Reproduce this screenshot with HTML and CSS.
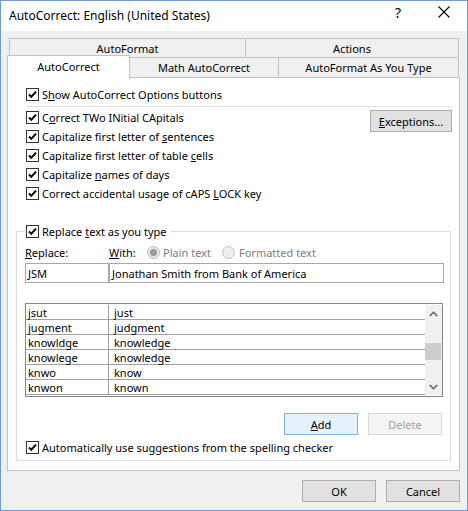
FILE: index.html
```html
<!DOCTYPE html>
<html>
<head>
<meta charset="utf-8">
<link rel="stylesheet" href="styles.css">
</head>
<body>
<div class="window">
  <div class="titlebar">
    <span class="title">AutoCorrect: English (United States)</span>
    <div class="caps">
      <span class="cap help">?</span>
      <span class="cap close"><svg width="12" height="12" viewBox="0 0 12 12"><path d="M0.5 0.5L11.5 11.5M11.5 0.5L0.5 11.5" stroke="#000" stroke-width="1.1" fill="none"/></svg></span>
    </div>
  </div>
  <div class="body">
    <div class="tabs">
      <div class="tabrow back">
        <div class="tab w-af">AutoFormat</div>
        <div class="tab w-act">Actions</div>
      </div>
      <div class="tabrow front">
        <div class="tab sel">AutoCorrect</div>
        <div class="tab w-math">Math AutoCorrect</div>
        <div class="tab w-afy">AutoFormat As You Type</div>
      </div>
    </div>
    <div class="panel">
      <div class="chk row-show"><span class="box"><svg width="11" height="11" viewBox="0 0 11 11"><path d="M2 5.5L4.3 7.8L9 2.6" stroke="#000" stroke-width="2" fill="none"/></svg></span><span>S<u>h</u>ow AutoCorrect Options buttons</span></div>
      <div class="sep"></div>
      <div class="opts">
        <div class="optlist">
          <div class="chk"><span class="box"><svg width="11" height="11" viewBox="0 0 11 11"><path d="M2 5.5L4.3 7.8L9 2.6" stroke="#000" stroke-width="2" fill="none"/></svg></span><span>C<u>o</u>rrect TWo INitial CApitals</span></div>
          <div class="chk"><span class="box"><svg width="11" height="11" viewBox="0 0 11 11"><path d="M2 5.5L4.3 7.8L9 2.6" stroke="#000" stroke-width="2" fill="none"/></svg></span><span>Capitalize first letter of <u>s</u>entences</span></div>
          <div class="chk"><span class="box"><svg width="11" height="11" viewBox="0 0 11 11"><path d="M2 5.5L4.3 7.8L9 2.6" stroke="#000" stroke-width="2" fill="none"/></svg></span><span>Capitalize first letter of table <u>c</u>ells</span></div>
          <div class="chk"><span class="box"><svg width="11" height="11" viewBox="0 0 11 11"><path d="M2 5.5L4.3 7.8L9 2.6" stroke="#000" stroke-width="2" fill="none"/></svg></span><span>Capitalize <u>n</u>ames of days</span></div>
          <div class="chk"><span class="box"><svg width="11" height="11" viewBox="0 0 11 11"><path d="M2 5.5L4.3 7.8L9 2.6" stroke="#000" stroke-width="2" fill="none"/></svg></span><span>Correct accidental usage of cAPS <u>L</u>OCK key</span></div>
        </div>
        <div class="btn exc"><u>E</u>xceptions...</div>
      </div>
      <div class="group">
        <div class="chk legend"><span class="box"><svg width="11" height="11" viewBox="0 0 11 11"><path d="M2 5.5L4.3 7.8L9 2.6" stroke="#000" stroke-width="2" fill="none"/></svg></span><span>Replace <u>t</u>ext as you type</span></div>
        <div class="labels">
          <span class="lbl-rep"><u>R</u>eplace:</span>
          <span class="lbl-with"><u>W</u>ith:</span>
          <span class="radio on"><span class="dot"></span></span>
          <span class="dis lbl-plain">Plain text</span>
          <span class="radio"></span>
          <span class="dis lbl-fmt">Formatted text</span>
        </div>
        <div class="inputs">
          <div class="inp w1">JSM</div>
          <div class="inp w2">Jonathan Smith from Bank of America</div>
        </div>
        <div class="list">
          <div class="rows">
            <div class="r"><span class="c1">jsut</span><span class="c2">just</span></div>
            <div class="r"><span class="c1">jugment</span><span class="c2">judgment</span></div>
            <div class="r"><span class="c1">knowldge</span><span class="c2">knowledge</span></div>
            <div class="r"><span class="c1">knowlege</span><span class="c2">knowledge</span></div>
            <div class="r"><span class="c1">knwo</span><span class="c2">know</span></div>
            <div class="r"><span class="c1">knwon</span><span class="c2">known</span></div>
          </div>
          <div class="sb">
            <div class="arrow"><svg width="9" height="6" viewBox="0 0 9 6"><path d="M0.8 5L4.5 1.3L8.2 5" stroke="#606060" stroke-width="1.6" fill="none"/></svg></div>
            <div class="track"><div class="thumb"></div></div>
            <div class="arrow"><svg width="9" height="6" viewBox="0 0 9 6"><path d="M0.8 1L4.5 4.7L8.2 1" stroke="#606060" stroke-width="1.6" fill="none"/></svg></div>
          </div>
        </div>
        <div class="actions">
          <div class="btn def"><u>A</u>dd</div>
          <div class="btn off">Delete</div>
        </div>
        <div class="chk auto"><span class="box"><svg width="11" height="11" viewBox="0 0 11 11"><path d="M2 5.5L4.3 7.8L9 2.6" stroke="#000" stroke-width="2" fill="none"/></svg></span><span>Automatically use su<u>g</u>gestions from the spelling checker</span></div>
      </div>
    </div>
    <div class="footer">
      <div class="btn">OK</div>
      <div class="btn">Cancel</div>
    </div>
  </div>
</div>
</body>
</html>
```

FILE: styles.css
```css
* { box-sizing: border-box; }
html, body { margin: 0; padding: 0; }
body {
  width: 468px;
  height: 511px;
  font-family: "Noto Sans", "DejaVu Sans", sans-serif;
  font-size: 11px;
  color: #000;
  background: #fff;
}
u { text-decoration: underline; text-underline-offset: 1px; }

.window {
  width: 468px;
  height: 511px;
  border: 1px solid #6d9bd6;
  display: flex;
  flex-direction: column;
  background: #f0f0f0;
}

.titlebar {
  height: 30px;
  background: #fff;
  display: flex;
  align-items: center;
  flex: none;
}
.title {
  margin-left: 8px;
  margin-top: -1px;
  font-size: 12px;
}
.caps {
  margin-left: auto;
  display: flex;
  align-self: flex-start;
}
.cap {
  width: 46px;
  height: 22px;
  display: flex;
  align-items: center;
  justify-content: center;
}
.help { font-size: 14px; }

.body {
  flex: 1;
  display: flex;
  flex-direction: column;
}

.tabs { margin-top: 7px; }
.tabrow { display: flex; }
.tab {
  border: 1px solid #c2c2c2;
  background: #f0f0f0;
  display: flex;
  align-items: center;
  justify-content: center;
}
.tab + .tab { margin-left: -1px; }
.back { margin-left: 8px; height: 20px; }
.back .tab { height: 20px; }
.w-af { width: 237px; }
.w-act { width: 214px; }
.front {
  margin-left: 6px;
  margin-top: -1px;
  height: 21px;
  align-items: flex-start;
}
.front .tab { height: 21px; }
.front .sel {
  width: 123px;
  height: 24px;
  margin-top: -2px;
  background: #fff;
  border-bottom: none;
  position: relative;
  z-index: 1;
  padding-bottom: 2px;
}
.w-math { width: 150px; }
.w-afy { width: 181px; }

.panel {
  margin-left: 6px;
  margin-top: -1px;
  width: 453px;
  height: 394px;
  border: 1px solid #c2c2c2;
  background: #fff;
  display: flex;
  flex-direction: column;
  flex: none;
}

.chk {
  display: flex;
  align-items: center;
  height: 19px;
  gap: 3px;
  white-space: nowrap;
}
.box {
  width: 13px;
  height: 13px;
  border: 1px solid #333;
  background: #fff;
  display: flex;
  align-items: center;
  justify-content: center;
  flex: none;
}
.box svg { display: block; }

.row-show { margin: 7px 0 0 18px; }
.sep {
  margin: 2px 6px 0 18px;
  height: 1px;
  background: #e3e3e3;
}
.opts {
  display: flex;
}
.optlist {
  margin: 1px 0 0 18px;
}

.btn {
  width: 74px;
  height: 22px;
  border: 1px solid #adadad;
  background: #e1e1e1;
  display: flex;
  align-items: center;
  justify-content: center;
}
.exc {
  width: 82px;
  margin: 3px 7px 0 auto;
}
.def {
  background: #e5f1fb;
  border-color: #7eb4ea;
}
.off {
  background: #f4f4f4;
  border-color: #d9d9d9;
  color: #a3a3a3;
}

.group {
  margin: 28px 0 0 8px;
  width: 435px;
  height: 230px;
  border: 1px solid #dcdcdc;
  padding-left: 8px;
  display: flex;
  flex-direction: column;
}
.legend {
  margin-top: -10px;
  align-self: flex-start;
  background: #fff;
  padding: 0 3px 0 1px;
}
.labels {
  display: flex;
  align-items: center;
  height: 16px;
  margin-top: 3px;
  white-space: nowrap;
}
.lbl-rep { width: 84px; }
.lbl-with { width: 38px; }
.radio {
  width: 13px;
  height: 13px;
  border-radius: 50%;
  border: 1px solid #c4c4c4;
  background: #eeeeee;
  display: flex;
  align-items: center;
  justify-content: center;
  flex: none;
}
.radio.on { background: #e6e6e6; border-color: #bcbcbc; }
.dot {
  width: 7px;
  height: 7px;
  border-radius: 50%;
  background: #9a9a9a;
}
.dis { color: #7d7d7d; }
.lbl-plain { width: 59px; margin-left: 3px; }
.lbl-fmt { margin-left: 4px; }

.inputs {
  display: flex;
  margin-top: 3px;
}
.inp {
  height: 20px;
  border: 1px solid #a8a8a8;
  display: flex;
  align-items: center;
  padding-left: 2px;
  white-space: nowrap;
}
.w1 { width: 84px; }
.w2 { width: 335px; }

.list {
  margin-top: 20px;
  width: 418px;
  height: 94px;
  border: 1px solid #828790;
  padding: 1px 0;
  display: flex;
}
.rows { width: 399px; }
.r {
  height: 15px;
  border-bottom: 1px solid #a0a0a0;
  display: flex;
  align-items: center;
}
.c1 {
  width: 83px;
  height: 14px;
  border-right: 1px solid #a0a0a0;
  padding-left: 2px;
  display: flex;
  align-items: center;
}
.c2 { padding-left: 5px; }
.sb {
  width: 17px;
  background: #f0f0f0;
  display: flex;
  flex-direction: column;
}
.arrow {
  height: 17px;
  display: flex;
  align-items: center;
  justify-content: center;
}
.track { flex: 1; }
.thumb {
  margin: 21px 1px 0 0;
  height: 17px;
  background: #cdcdcd;
}

.actions {
  display: flex;
  justify-content: flex-end;
  gap: 10px;
  margin: 16px 8px 0 0;
}
.auto { margin: 3px 0 0 1px; }

.footer {
  display: flex;
  justify-content: flex-end;
  gap: 10px;
  margin-top: 9px;
  padding-right: 7px;
}
```
